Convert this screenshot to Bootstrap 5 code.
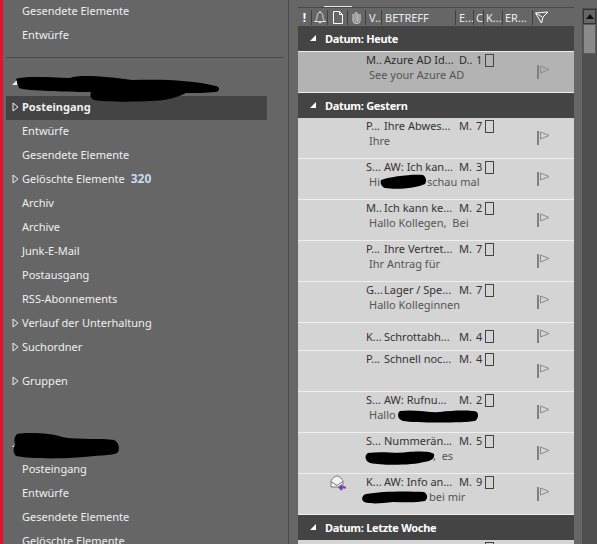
<!DOCTYPE html>
<html lang="en">
<head>
  <meta charset="UTF-8">
  <meta name="viewport" content="width=device-width, initial-scale=1">
  <title>Outlook</title>
  <link href="https://cdn.jsdelivr.net/npm/bootstrap@5.3.3/dist/css/bootstrap.min.css" rel="stylesheet">
  <style>
    html, body { height: 544px; overflow: hidden; }
    body { background: #666; font-family: "Noto Sans", "Open Sans", sans-serif; font-size: 11px; line-height: 16px; color: #f0f0f0; }
    .app-frame { height: 544px; border-left: 3px solid #e2142d; position: relative; overflow: hidden; }

    /* folder pane */
    .folder-pane { width: 286px; flex: none; border-right: 1px solid #4a4a4a; height: 544px; padding-left: 3px; margin-right: 9px; overflow: hidden; }
    .folder-item { height: 24px; padding-left: 16px; padding-bottom: 2px; position: relative; white-space: nowrap; display: flex; align-items: center; }
    .folder-item.is-active { background: #444; width: 261px; font-weight: 700; }
    .folder-count { font-size: 12px; font-weight: 700; color: #c8dcee; margin-left: 6px; }
    .folder-arrow { position: absolute; left: 6px; top: 6px; }
    .pane-rule { border-top: 1px solid #4a4a4a; margin-top: 9px; height: 39px; width: 278px; }
    .account-gap { height: 64px; }
    .group-gap { height: 10px; }

    /* message list */
    .mail-pane { width: 276px; flex: none; height: 544px; padding-top: 7px; }
    .col-heads { height: 19px; border-top: 1px solid #4a4a4a; position: relative; white-space: nowrap; color: #e8eef2; display: flex; align-items: center; }
    .col-heads::before { content: ""; position: absolute; left: 26px; top: -2px; width: 28px; height: 1px; background: #e8e8e8; }
    .head-cell { border-left: 1px solid #3f3f3f; height: 15px; line-height: 15px; padding-left: 3px; overflow: hidden; flex: none; display: flex; align-items: center; }
    .head-bang { font-size: 12px; font-weight: 700; color: #fff; border-left: 0; padding: 0; }
    .group-head { height: 25px; background: #444; color: #fff; font-weight: 700; letter-spacing: -.3px; display: flex; align-items: center; padding-left: 27px; position: relative; }
    .group-head.is-first { height: 26px; border-bottom: 1px solid #eee; }
    .group-head svg { position: absolute; left: 11px; top: 8px; }
    .mail-row { height: 41px; background: #d4d4d4; border-bottom: 1px solid #eee; color: #333; position: relative; padding-left: 68px; }
    .mail-row.is-picked { background: #b3b3b3; color: #2c2c2c; }
    .mail-row.is-short { height: 28px; }
    .mail-top { display: flex; height: 16px; align-items: center; white-space: nowrap; }
    .mail-from { width: 18px; flex: none; }
    .mail-subject { width: 75px; flex: none; }
    .mail-date { width: 17px; flex: none; }
    .mail-num { width: 9px; flex: none; }
    .mail-box { width: 9px; height: 13px; border: 1px solid #444; flex: none; align-self: flex-start; margin-top: 2px; }
    .mail-snippet { padding-left: 3px; color: #555; height: 14px; line-height: 14px; white-space: nowrap; }
    .snippet-gap { display: inline-block; }
    .mail-flag { position: absolute; left: 239px; top: 13px; }
    .mail-row.is-short .mail-top { height: 27px; }
    .mail-row.is-short .mail-box { margin-top: 7px; }
    .mail-row.is-short .mail-flag { top: 6px; }
    .mail-icon { position: absolute; left: 32px; top: 1px; }

    /* scrollbar */
    .scroll-gutter { width: 15px; flex: none; margin-left: 8px; height: 544px; margin-top: 8px; background: #4f4f4f; padding: 1px 1px 0 1px; }
    .scroll-btn { height: 15px; background: #666; border: 1px solid #333; display: flex; align-items: center; justify-content: center; }
    .scroll-thumb { height: 30px; background: #8a8a8a; border: 1px solid #5a5a5a; }

    .smudge { position: absolute; left: -3px; top: 0; pointer-events: none; }
  </style>
</head>
<body>
  <div class="app-frame d-flex">

    <!-- Folder pane -->
    <div class="folder-pane">
      <div class="folder-item">Gesendete Elemente</div>
      <div class="folder-item">Entwürfe</div>
      <div class="pane-rule"></div>
      <div id="inboxFolders"></div>
      <div class="group-gap"></div>
      <div class="folder-item" id="gruppen"></div>
      <div class="account-gap"></div>
      <div id="secondFolders"></div>
    </div>

    <!-- Message list -->
    <div class="mail-pane">
      <div class="col-heads">
        <span class="head-cell head-bang justify-content-center" style="width:13px">!</span>
        <span class="head-cell justify-content-center" style="width:16px;padding:0">
          <svg width="14" height="14" viewBox="0 0 14 14" fill="none" stroke="#ddd"><path d="M1 11.500h12M2.500 11c1.500-1.500 1.500-3 1.700-5.500C4.500 3.500 5.500 2.500 7 2.500s2.500 1 2.800 3c.2 2.500.2 4 1.700 5.500M7 1v1.500M5.500 12c.5 1.300 2.500 1.300 3 0"/></svg>
        </span>
        <span class="head-cell justify-content-center" style="width:20px;padding:0">
          <svg width="10" height="13" viewBox="0 0 10 13" fill="none" stroke="#fff"><path d="M.5.5h6l3 3v9h-9zM6.500.5v3h3"/></svg>
        </span>
        <span class="head-cell justify-content-center" style="width:18px;padding:0">
          <svg width="9" height="13" viewBox="0 0 9 13" fill="none" stroke="#ddd"><path d="M6 3v6.500a1.500 1.500 0 0 1-3 0V2.500a1 1 0 0 1 2 0V10M8 3v7a3.500 2.500 0 0 1-7 0V3"/></svg>
        </span>
        <span class="head-cell" style="width:16px">V..</span>
        <span class="head-cell" style="width:74px">BETREFF</span>
        <span class="head-cell" style="width:18px">E...</span>
        <span class="head-cell" style="width:10px;padding-left:2px">C</span>
        <span class="head-cell" style="width:19px;padding-left:2px">K...</span>
        <span class="head-cell" style="width:30px;padding-left:2px">ER...</span>
        <span class="head-cell" style="width:20px;padding-left:2px">
          <svg width="14" height="13" viewBox="0 0 14 13" fill="none" stroke="#fff"><path d="M.5 2l12.500-1-5 5-1.500 6zM1 2l6 4"/></svg>
        </span>
      </div>
      <div id="mailRows"></div>
    </div>

    <!-- Scrollbar -->
    <div class="scroll-gutter">
      <div class="scroll-btn">
        <svg width="8" height="5" viewBox="0 0 8 5"><path d="M4 0l4 5H0z" fill="#111"/></svg>
      </div>
      <div class="scroll-thumb"></div>
    </div>

    <!-- Blacked out parts of the screenshot -->
    <svg class="smudge" width="597" height="544" viewBox="0 0 597 544">
      <path d="M12 85l5-5v5zM12 447l5-5v5z" fill="#eee"/>
      <path d="M16 79c6-3 30-2 54-1c10-4 40-1 62 2c30-1 60 0 84 6c4 1 4 5 0 6c-10 1-22 1-30 1c-8 4-20 8-35 8c-20 1-45 1-57-1c-4-2-4-5-3-8c-15 0-67-1-72-4z" fill="#000"/>
      <path d="M17 434c10-2 35-1 45 3c15 3 40 1 52 3c5 2 6 9 4 12c-3 4-20 3-34 5c-20 2-55 2-68-1c-3-3-3-8-1-12c-1-3-1-7 2-10z" fill="#000"/>
      <path d="M381 180c8-3 30-6 42-5c3 2 4 6 2 9c-8 4-28 6-40 4c-4-1-5-6-4-8z" fill="#000"/>
      <path d="M400 411c14-2 30 2 40 1c14-2 34-2 37 0c2 3 1 7-2 9c-12 2-60 2-72 0c-6-2-6-8-3-10z" fill="#000"/>
      <path d="M368 453c15-2 30 1 40-1c8-1 24-1 26 2c1 4-2 7-10 8c-10 3-40 4-54 1c-5-2-6-8-2-10z" fill="#000"/>
      <path d="M366 494c16-3 40-3 58-2c4 2 4 7 1 9c-10 2-22 1-32 1c-14 2-28 2-30-1c-2-3 0-6 3-7z" fill="#000"/>
    </svg>
  </div>

  <script>
    const arrow = '<svg class="folder-arrow" width="7" height="10" viewBox="0 0 7 10" fill="none" stroke="#eee"><path d="M1 1l5 4-5 4z"/></svg>';

    function folderRow(item) {
      const count = item.count ? `<span class="folder-count">${item.count}</span>` : '';
      const cls = item.active ? 'folder-item is-active' : 'folder-item';
      return `<div class="${cls}">${item.arrow ? arrow : ''}${item.name}${count}</div>`;
    }

    const inbox = [
      { name: 'Posteingang', arrow: true, active: true },
      { name: 'Entwürfe' },
      { name: 'Gesendete Elemente' },
      { name: 'Gelöschte Elemente', arrow: true, count: 320 },
      { name: 'Archiv' },
      { name: 'Archive' },
      { name: 'Junk-E-Mail' },
      { name: 'Postausgang' },
      { name: 'RSS-Abonnements' },
      { name: 'Verlauf der Unterhaltung', arrow: true },
      { name: 'Suchordner', arrow: true }
    ];
    const second = ['Posteingang', 'Entwürfe', 'Gesendete Elemente', 'Gelöschte Elemente'];

    document.getElementById('inboxFolders').innerHTML = inbox.map(folderRow).join('');
    document.getElementById('gruppen').innerHTML = arrow + 'Gruppen';
    document.getElementById('secondFolders').innerHTML = second.map(n => folderRow({ name: n })).join('');

    const flag = '<svg class="mail-flag" width="13" height="14" viewBox="0 0 13 14" fill="none"><path d="M1 0v14" stroke="#808080" stroke-width="2"/><path d="M3.500 1l8.500 3.500-8.500 3.500z" stroke="#8a8a8a"/></svg>';
    const replied = '<svg class="mail-icon" width="16" height="16" viewBox="0 0 16 16" fill="none"><path d="M1 6.500c0-2 4-5.500 6-5.500s6 3.500 6 5.500v5.500H1z" fill="#f4f4f4" stroke="#777"/><path d="M1 6.500l6 4 6-4" stroke="#777"/><path d="M16 12.500H10M12 10l-2.500 2.500 2.500 2.500" stroke="#7a3fb0" stroke-width="2"/></svg>';

    // gap is the room the blacked out words took in the snippet
    const rows = [
      { group: 'Datum: Heute', first: true },
      { from: 'M..', subj: 'Azure AD Id...', date: 'D..', num: 1, text: 'See your Azure AD', picked: true },
      { group: 'Datum: Gestern' },
      { from: 'P...', subj: 'Ihre Abwes...', date: 'M.', num: 7, text: 'Ihre' },
      { from: 'S...', subj: 'AW: Ich kan...', date: 'M.', num: 3, text: 'Hi', gap: 47, after: 'schau mal' },
      { from: 'M..', subj: 'Ich kann ke...', date: 'M.', num: 2, text: 'Hallo Kollegen,&nbsp; Bei' },
      { from: 'P...', subj: 'Ihre Vertret...', date: 'M.', num: 7, text: 'Ihr Antrag für' },
      { from: 'G...', subj: 'Lager / Spe...', date: 'M.', num: 7, text: 'Hallo Kolleginnen' },
      { from: 'K...', subj: 'Schrottabh...', date: 'M.', num: 4, short: true },
      { from: 'P...', subj: 'Schnell noc...', date: 'M.', num: 4, text: '&nbsp;' },
      { from: 'S...', subj: 'AW: Rufnu...', date: 'M.', num: 2, text: 'Hallo' },
      { from: 'S...', subj: 'Nummerän...', date: 'M.', num: 5, text: '', gap: 64, after: ',&nbsp; es' },
      { from: 'K...', subj: 'AW: Info an...', date: 'M.', num: 9, text: '', gap: 60, after: 'bei mir', icon: true },
      { group: 'Datum: Letzte Woche' },
      { from: '', subj: '', date: '', num: '' }
    ];

    let html = '';
    for (const row of rows) {
      if (row.group) {
        html += `<div class="group-head${row.first ? ' is-first' : ''}"><svg width="8" height="8" viewBox="0 0 8 8"><path d="M7 1v6H1z" fill="#fff"/></svg>${row.group}</div>`;
        continue;
      }
      let cls = 'mail-row';
      if (row.picked) cls += ' is-picked';
      if (row.short) cls += ' is-short';
      const gap = row.gap ? `<span class="snippet-gap" style="width:${row.gap}px"></span>${row.after}` : '';
      html += `<div class="${cls}">
        ${row.icon ? replied : ''}
        <div class="mail-top">
          <span class="mail-from">${row.from}</span>
          <span class="mail-subject">${row.subj}</span>
          <span class="mail-date">${row.date}</span>
          <span class="mail-num">${row.num}</span>
          <span class="mail-box"></span>
        </div>
        ${row.text || row.gap ? `<div class="mail-snippet">${row.text}${gap}</div>` : ''}
        ${flag}
      </div>`;
    }
    document.getElementById('mailRows').innerHTML = html;
  </script>
  <script src="https://cdn.jsdelivr.net/npm/bootstrap@5.3.3/dist/js/bootstrap.bundle.min.js"></script>
</body>
</html>
